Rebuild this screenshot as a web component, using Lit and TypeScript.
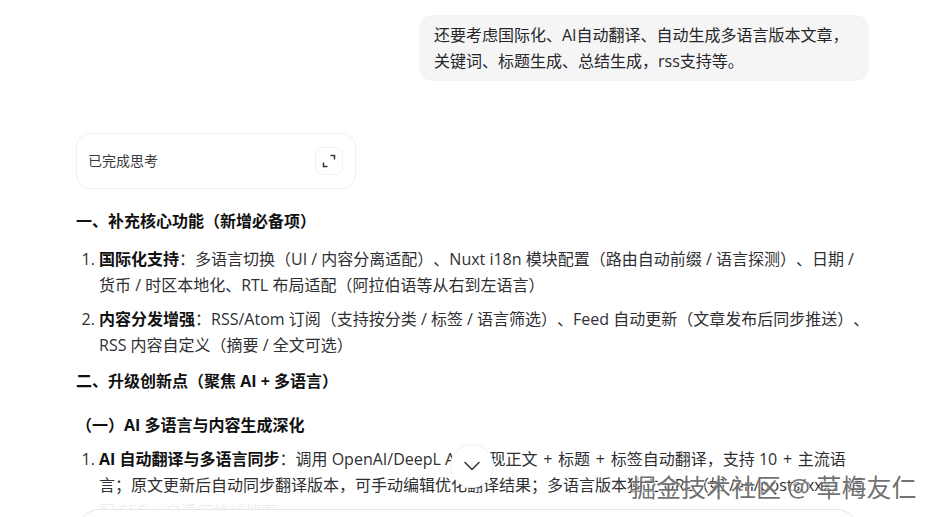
import { LitElement, html, css } from "lit";
import { customElement } from "lit/decorators.js";

@customElement("app-root")
export class AppRoot extends LitElement {
  static styles = css`
    :host {
      display: block;
      width: 933px;
      height: 517px;
      overflow: hidden;
      position: relative;
      background: #fff;
      font-family: "Open Sans", "Noto Sans CJK SC", sans-serif;
      font-size: 16px;
      line-height: 26px;
      color: #2f2f33;
      text-spacing-trim: space-all;
    }
    .page { display: flex; flex-direction: column; padding: 15px 63px 0 76px; }
    .bubble {
      align-self: flex-end;
      width: 450px;
      margin-right: 1px;
      box-sizing: border-box;
      padding: 7px 15px;
      background: #f5f5f6;
      border-radius: 14px;
      color: #26262a;
    }
    .think {
      margin-top: 52px;
      width: 280px;
      height: 56px;
      box-sizing: border-box;
      border: 1px solid #efefef;
      border-radius: 14px;
      display: flex;
      align-items: center;
      justify-content: space-between;
      padding: 0 12px 0 11px;
      font-size: 14px;
      color: #3a3a3d;
    }
    .expand {
      width: 26px;
      height: 26px;
      border: 1px solid #f0f0f0;
      border-radius: 8px;
      display: flex;
      align-items: center;
      justify-content: center;
    }
    h3 { margin: 0; font-size: 16px; line-height: 26px; font-weight: 700; color: #111; }
    h3.a { margin-top: 19px; }
    h3.b { margin-top: 2px; }
    h3.c { margin-top: 18px; }
    ol { margin: 12px 0 0; padding: 0 0 0 23px; }
    ol.second { margin-top: 8px; }
    li { margin-bottom: 8px; }
    b { font-weight: 700; color: #111; }
    .plus { margin: 0 1.6px; }
    .fade {
      position: absolute;
      left: 0;
      right: 0;
      top: 494px;
      height: 23px;
      background: linear-gradient(rgba(255, 255, 255, 0), rgba(255, 255, 255, 0.9) 40%, #fff);
    }
    .input {
      position: absolute;
      left: 76px;
      width: 784px;
      top: 509px;
      height: 60px;
      box-sizing: border-box;
      border: 1px solid #e6e6e6;
      border-radius: 24px;
      background: #fff;
    }
    .down {
      position: absolute;
      left: 450px;
      top: 444px;
      width: 44px;
      height: 44px;
      box-sizing: border-box;
      border: 1px solid #f0f0f0;
      border-radius: 50%;
      background: #fff;
      display: flex;
      align-items: center;
      justify-content: center;
    }
    .mark {
      position: absolute;
      left: 631px;
      top: 469px;
      font-size: 25px;
      line-height: 36px;
      white-space: nowrap;
      color: rgba(75, 75, 75, 0.8);
      text-shadow: 0 0 2px #fff, 1px 1px 0 rgba(255, 255, 255, 0.7);
    }
  `;

  render() {
    return html`
      <div class="page">
        <div class="bubble">还要考虑国际化、AI自动翻译、自动生成多语言版本文章，关键词、标题生成、总结生成，rss支持等。</div>
        <div class="think">
          <span>已完成思考</span>
          <span class="expand">
            <svg width="14" height="14" viewBox="0 0 14 14" fill="none" stroke="#333" stroke-width="1.5">
              <path d="M8.500 1.500h4v4M1.500 8.500v4h4" />
            </svg>
          </span>
        </div>
        <h3 class="a">一、补充核心功能（新增必备项）</h3>
        <ol>
          <li><b>国际化支持</b>：多语言切换（UI / 内容分离适配）、Nuxt i18n 模块配置（路由自动前缀 / 语言探测）、日期 / 货币 / 时区本地化、RTL 布局适配（阿拉伯语等从右到左语言）</li>
          <li><b>内容分发增强</b>：RSS/Atom 订阅（支持按分类 / 标签 / 语言筛选）、Feed 自动更新（文章发布后同步推送）、RSS 内容自定义（摘要 / 全文可选）</li>
        </ol>
        <h3 class="b">二、升级创新点（聚焦 AI + 多语言）</h3>
        <h3 class="c">（一）AI 多语言与内容生成深化</h3>
        <ol class="second">
          <li><b>AI 自动翻译与多语言同步</b>：调用 OpenAI/DeepL API 实现正文 <span class="plus">+</span> 标题 <span class="plus">+</span> 标签自动翻译，支持 10 <span class="plus">+</span> 主流语言；原文更新后自动同步翻译版本，可手动编辑优化翻译结果；多语言版本独立 URL（如 /en/posts/xxx）适配 SEO，自适应地域搜索</li>
        </ol>
      </div>
      <div class="fade"></div>
      <div class="input"></div>
      <div class="down">
        <svg width="18" height="18" viewBox="0 0 18 18" fill="none" stroke="#333" stroke-width="1.500" stroke-linecap="round" stroke-linejoin="round">
          <path d="M2 5.500l7 7 7-7" />
        </svg>
      </div>
      <div class="mark">掘金技术社区 @ 草梅友仁</div>
    `;
  }
}
